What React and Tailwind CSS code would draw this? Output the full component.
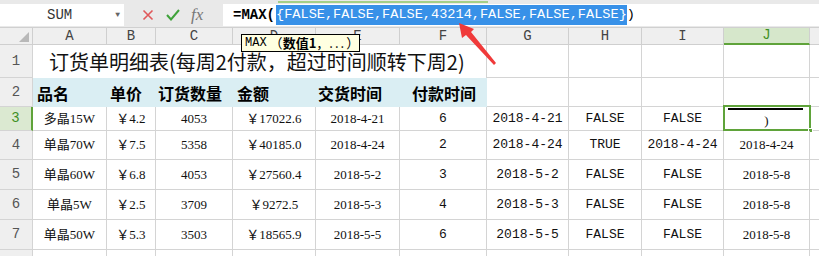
import React from 'react';

const mono = { fontFamily: '"Liberation Mono", "Noto Sans CJK SC", monospace' };
const serif = { fontFamily: '"Liberation Serif", "Noto Sans CJK SC", serif' };
const cjk = { fontFamily: '"Noto Sans CJK SC", sans-serif' };

// column widths A..J, K takes the rest
const colW = ['w-[74px]', 'w-[49px]', 'w-[77px]', 'w-[83px]', 'w-[84px]', 'w-[87px]', 'w-[82px]', 'w-[73px]', 'w-[82px]', 'w-[86px]'];
const letters = ['A', 'B', 'C', 'D', 'E', 'F', 'G', 'H', 'I', 'J'];
const colFont = [serif, serif, serif, serif, serif, mono, mono, mono, mono, serif];

const rows = [
  { n: 3, h: 'h-[24px]', cells: ['多晶15W', '￥4.2', '4053', '￥17022.6', '2018-4-21', '6', '2018-4-21', 'FALSE', 'FALSE', ''] },
  { n: 4, h: 'h-[29px]', cells: ['单晶70W', '￥7.5', '5358', '￥40185.0', '2018-4-24', '2', '2018-4-24', 'TRUE', '2018-4-24', '2018-4-24'] },
  { n: 5, h: 'h-[30px]', cells: ['单晶60W', '￥6.8', '4053', '￥27560.4', '2018-5-2', '3', '2018-5-2', 'FALSE', 'FALSE', '2018-5-8'] },
  { n: 6, h: 'h-[30px]', cells: ['单晶5W', '￥2.5', '3709', '￥9272.5', '2018-5-3', '4', '2018-5-3', 'FALSE', 'FALSE', '2018-5-8'] },
  { n: 7, h: 'h-[30px]', cells: ['单晶50W', '￥5.3', '3503', '￥18565.9', '2018-5-5', '6', '2018-5-5', 'FALSE', 'FALSE', '2018-5-8'] },
];

const RowHead = ({ n, active }) => (
  <div
    className={
      'w-[33px] shrink-0 flex items-center justify-center text-[14px] border-b ' +
      (active
        ? 'bg-[#dbe9d1] text-[#3f8f25] border-r-2 border-r-[#5fa33a] border-b-[#d4d4d4]'
        : 'bg-[#efefef] text-[#555] border-r border-[#d4d4d4]')
    }
    style={mono}
  >
    {n}
  </div>
);

const Blank = ({ w }) => <div className={w + ' shrink-0 border-r border-b border-[#d4d4d4] bg-white'} />;

export default function App() {
  return (
    <div className="relative w-[819px] h-[256px] overflow-hidden bg-white select-none">
      {/* formula bar */}
      <div className="relative h-[28px] bg-[#e9e9e9] border-b border-[#d0d0d0] flex items-end pb-[1px]">
        <div className="absolute left-[278px] top-[1px] w-[210px] h-[2px] bg-[#a5cf88]" />
        <div className="w-[124px] h-[22px] bg-white flex items-center relative" style={mono}>
          <span className="flex-1 text-center text-[14px] text-[#333] pl-[4px]">SUM</span>
          <span className="text-[8px] text-[#666] mr-[4px]">▼</span>
        </div>
        <div className="w-[99px] h-[22px] flex items-center">
          <svg width="12" height="12" viewBox="0 0 12 12" className="ml-[18px]">
            <path d="M1.5 1.5 L10.5 10.5 M10.5 1.5 L1.5 10.5" stroke="#e0585a" strokeWidth="1.6" fill="none" />
          </svg>
          <svg width="14" height="12" viewBox="0 0 14 12" className="ml-[12px]">
            <path d="M1 6 L5 10.5 L13 1" stroke="#3fa23a" strokeWidth="2" fill="none" />
          </svg>
          <span className="ml-[11px] text-[17px] italic text-[#777]" style={serif}>fx</span>
        </div>
        <div className="flex-1 h-[22px] bg-white flex items-center pl-[10px] text-[13.6px] text-black" style={mono}>
          <span className="font-bold text-[14px]">=MAX(</span>
          <span className="bg-[#3891e8] text-white ml-[1px]">{'{FALSE,FALSE,FALSE,43214,FALSE,FALSE,FALSE}'}</span>
          <span>)</span>
        </div>
      </div>

      {/* column headers */}
      <div className="flex h-[17px] bg-[#efefef]">
        <div className="w-[33px] shrink-0 border-r border-b border-[#cfcfcf] flex items-end justify-end pr-[3px] pb-[2px]">
          <svg width="10" height="10" viewBox="0 0 10 10">
            <polygon points="10,0 10,10 0,10" fill="#b8b8b8" />
          </svg>
        </div>
        {letters.map((l, i) =>
          l === 'J' ? (
            <div
              key={l}
              className={colW[i] + ' shrink-0 bg-[#d6e7cb] border-r border-[#cfcfcf] border-b-2 border-b-[#5fa33a] flex items-center justify-center text-[14px] text-[#3f8f25]'}
              style={mono}
            >
              {l}
            </div>
          ) : (
            <div
              key={l}
              className={colW[i] + ' shrink-0 border-r border-b border-[#cfcfcf] flex items-center justify-center text-[14px] text-[#444]'}
              style={mono}
            >
              {l}
            </div>
          )
        )}
        <div className="flex-1 border-b border-[#cfcfcf]" />
      </div>

      {/* row 1 */}
      <div className="flex h-[33px]">
        <RowHead n={1} />
        <div className="w-[454px] shrink-0 border-r border-[#d4d4d4] flex items-center pl-[16px] text-[20px] text-[#111] whitespace-nowrap" style={cjk}>
          订货单明细表(每周2付款，超过时间顺转下周2)
        </div>
        {colW.slice(6).map((w, i) => <Blank key={i} w={w} />)}
        <div className="flex-1 border-b border-[#d4d4d4]" />
      </div>

      {/* row 2 */}
      <div className="flex h-[29px]">
        <RowHead n={2} />
        <div className="w-[454px] shrink-0 bg-[#daeef3] flex items-center text-[16px] font-bold text-black whitespace-nowrap" style={cjk}>
          <span className="w-[74px] pl-[4px]">品名</span>
          <span className="w-[49px] pl-[3px]">单价</span>
          <span className="w-[77px] pl-[2px]">订货数量</span>
          <span className="w-[83px] pl-[4px]">金额</span>
          <span className="w-[84px] pl-[2px]">交货时间</span>
          <span className="w-[87px] pl-[12px]">付款时间</span>
        </div>
        {colW.slice(6).map((w, i) => <Blank key={i} w={w} />)}
        <div className="flex-1 border-b border-[#d4d4d4]" />
      </div>

      {/* data rows */}
      {rows.map((r) => (
        <div key={r.n} className={'flex ' + r.h}>
          <RowHead n={r.n} active={r.n === 3} />
          {r.cells.map((c, i) => (
            <div
              key={i}
              className={colW[i] + ' shrink-0 relative border-r border-b border-[#d4d4d4] flex items-center justify-center whitespace-nowrap text-[13px] text-[#111]'}
              style={colFont[i]}
            >
              {c}
              {r.n === 3 && i === 9 && (
                <>
                  <div className="absolute left-[-1px] top-[-2px] right-[-2px] bottom-[-1px] border-2 border-[#5fa33a]" />
                  <div className="absolute left-[4px] right-[6px] top-[1px] h-[2px] bg-black" />
                  <span className="mt-[4px]">)</span>
                  <div className="absolute right-[-4px] bottom-[-3px] w-[5px] h-[5px] bg-[#5fa33a] border border-white" />
                </>
              )}
            </div>
          ))}
          <div className="flex-1 border-b border-[#d4d4d4]" />
        </div>
      ))}

      {/* row 8, only its top edge is in view */}
      <div className="flex h-[30px]">
        <div className="w-[33px] shrink-0 bg-[#efefef] border-r border-[#d4d4d4]" />
        {colW.map((w, i) => <Blank key={i} w={w} />)}
      </div>

      {/* function tooltip */}
      <div className="absolute left-[241px] top-[34px] w-[119px] h-[18px] pl-[3px] bg-[#ffffe1] border border-black flex items-center text-[13px] text-black whitespace-nowrap" style={mono}>
        <span className="text-[12px]">MAX</span>
        <span style={cjk} className="ml-[3px]">（<b>数值1</b>，<span className="tracking-[2px]">...</span>）</span>
      </div>

      {/* red arrow annotation */}
      <svg className="absolute left-0 top-0 pointer-events-none" width="819" height="256">
        <polygon points="496,63 471,32 474,29 459,23 462,38 466,35 494,65" fill="#f03a3a" />
      </svg>
    </div>
  );
}
